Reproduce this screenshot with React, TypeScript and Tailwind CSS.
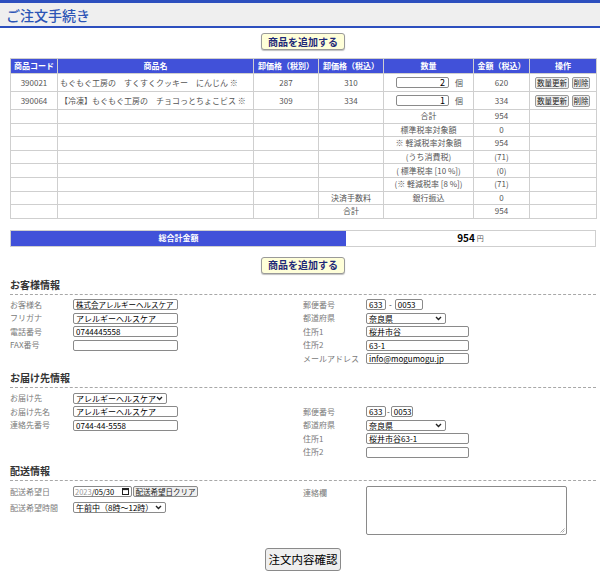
import React from "react";

const items = [
  { code: "390021", name: "もぐもぐ工房の　すくすくクッキー　にんじん ※", ex: "287", inc: "310", qty: "2", amount: "620" },
  { code: "390064", name: "【冷凍】もぐもぐ工房の　チョコっとちょこビス ※", ex: "309", inc: "334", qty: "1", amount: "334" },
];

const summary = [
  { a: "", b: "合計", c: "954" },
  { a: "", b: "標準税率対象額", c: "0" },
  { a: "", b: "※ 軽減税率対象額", c: "954" },
  { a: "", b: "(うち消費税)", c: "(71)" },
  { a: "", b: "( 標準税率 [10 %])", c: "(0)" },
  { a: "", b: "(※ 軽減税率 [8 %])", c: "(71)" },
  { a: "決済手数料", b: "銀行振込", c: "0" },
  { a: "合計", b: "", c: "954" },
];

function AddButton() {
  return (
    <div className="flex justify-center">
      <button className="h-[17px] w-[84px] whitespace-nowrap rounded-[3px] border border-[#9a9a9a] bg-[#ffffd9] text-[10px] font-bold leading-none text-[#1f2a78] shadow-[0_1px_1px_rgba(0,0,0,0.25)]">
        商品を追加する
      </button>
    </div>
  );
}

function Chevron() {
  return (
    <svg width="7" height="5" viewBox="0 0 7 5" className="shrink-0">
      <path d="M1 1l2.5 2.5L6 1" stroke="#222" strokeWidth="1.4" fill="none" />
    </svg>
  );
}

function Input({ value = "", w, size = "text-[8px]" }: { value?: string; w: string; size?: string }) {
  return (
    <div
      className={`flex h-[11px] items-center whitespace-nowrap rounded-[2px] border border-[#8a8a8a] bg-white pl-[2px] leading-[9px] text-black ${size} ${w}`}
    >
      {value}
    </div>
  );
}

function Select({ value, w }: { value: string; w: string }) {
  return (
    <div
      className={`flex h-[11px] items-center justify-between whitespace-nowrap rounded-[2px] border border-[#8a8a8a] bg-white pl-[2px] pr-[3px] text-[8px] leading-[9px] text-black ${w}`}
    >
      <span>{value}</span>
      <Chevron />
    </div>
  );
}

function Row({ label, children, h = "h-[13.5px]" }: { label?: string; children?: React.ReactNode; h?: string }) {
  return (
    <div className={`flex items-center ${h}`}>
      <div className="w-[63px] shrink-0 whitespace-nowrap text-[8px] leading-none text-[#7a7a7a]">{label}</div>
      {children}
    </div>
  );
}

function Heading({ children, mt }: { children: React.ReactNode; mt: string }) {
  return (
    <div className={`${mt} border-b border-dashed border-[#a8a8a8] pb-[3px] text-[10px] font-bold leading-[12px] text-[#333]`}>
      {children}
    </div>
  );
}

function Zip({ a, b, tight }: { a: string; b: string; tight?: boolean }) {
  return (
    <div className="flex items-center">
      <Input value={a} w="w-[20px]" />
      <span className={`text-[8px] leading-none text-[#333] ${tight ? "px-[1px]" : "px-[3px]"}`}>-</span>
      <Input value={b} w={tight ? "w-[22px]" : "w-[28px]"} />
    </div>
  );
}

const td = "border border-[#cfcfcf] text-[8px] leading-none text-[#555]";

export default function App() {
  return (
    <div className="min-h-[572px] w-[600px] bg-white font-['Noto_Sans_CJK_JP','Noto_Sans',sans-serif] text-[#333]">
      <div className="h-[3px] bg-[#2d4fbe]" />
      <div className="flex h-[25px] items-center border-b-2 border-[#2d4fbe] bg-[#efefef] pl-[6px] text-[14px] font-medium leading-none text-[#2c55b6]">
        ご注文手続き
      </div>

      <div className="pl-[10px] pr-[4px]">
        <div className="pt-[5px]">
          <AddButton />
        </div>

        <table className="mt-[8px] w-[586px] table-fixed border-collapse">
          <colgroup>
            <col className="w-[47px]" />
            <col className="w-[196px]" />
            <col className="w-[65px]" />
            <col className="w-[65px]" />
            <col className="w-[90px]" />
            <col className="w-[56px]" />
            <col className="w-[67px]" />
          </colgroup>
          <thead>
            <tr className="h-[15px] bg-[#4151d9] text-[8px] font-bold leading-none text-white">
              <th className="border border-[#cfcfcf] font-bold">商品コード</th>
              <th className="border border-[#cfcfcf] font-bold">商品名</th>
              <th className="border border-[#cfcfcf] font-bold">卸価格（税別）</th>
              <th className="border border-[#cfcfcf] font-bold">卸価格（税込）</th>
              <th className="border border-[#cfcfcf] font-bold">数量</th>
              <th className="border border-[#cfcfcf] font-bold">金額（税込）</th>
              <th className="border border-[#cfcfcf] font-bold">操作</th>
            </tr>
          </thead>
          <tbody>
            {items.map((it) => (
              <tr key={it.code} className="h-[18px]">
                <td className={`${td} text-center`}>{it.code}</td>
                <td className={`${td} whitespace-nowrap pl-[2px]`}>{it.name}</td>
                <td className={`${td} text-center`}>{it.ex}</td>
                <td className={`${td} text-center`}>{it.inc}</td>
                <td className={td}>
                  <div className="flex items-center pl-[12px]">
                    <div className="flex h-[11px] w-[53px] items-center justify-end rounded-[2px] border border-[#8a8a8a] pr-[3px] text-[9px] leading-none text-black">
                      {it.qty}
                    </div>
                    <span className="pl-[6px]">個</span>
                  </div>
                </td>
                <td className={`${td} text-center`}>{it.amount}</td>
                <td className={td}>
                  <div className="flex items-center gap-[3px] pl-[5px]">
                    <button className="h-[12px] w-[34px] whitespace-nowrap rounded-[2px] border border-[#999] bg-[#efefef] text-[7.5px] leading-none text-[#222]">
                      数量更新
                    </button>
                    <button className="h-[12px] w-[18px] whitespace-nowrap rounded-[2px] border border-[#999] bg-[#efefef] text-[7.5px] leading-none text-[#222]">
                      削除
                    </button>
                  </div>
                </td>
              </tr>
            ))}
            {summary.map((s, i) => (
              <tr key={i} className="h-[13.6px]">
                <td className={td} />
                <td className={td} />
                <td className={td} />
                <td className={`${td} text-center`}>{s.a}</td>
                <td className={`${td} text-center`}>{s.b}</td>
                <td className={`${td} text-center`}>{s.c}</td>
                <td className={td} />
              </tr>
            ))}
          </tbody>
        </table>

        <div className="mt-[11px] flex h-[17px] border border-[#cfcfcf]">
          <div className="flex w-[335px] items-center justify-center bg-[#4151d9] text-[8px] font-bold leading-none text-white">
            総合計金額
          </div>
          <div className="flex flex-1 items-center justify-center text-black">
            <span className="text-[10px] font-bold leading-none">954</span>
            <span className="pl-[2px] text-[7px] leading-none text-[#555]">円</span>
          </div>
        </div>

        <div className="mt-[10px]">
          <AddButton />
        </div>

        <Heading mt="mt-[5px]">お客様情報</Heading>
        <div className="mt-[3px] grid grid-cols-[293px_1fr]">
          <div>
            <Row label="お客様名">
              <Input value="株式会アレルギーヘルスケア" w="w-[105px]" size="text-[7.5px]" />
            </Row>
            <Row label="フリガナ">
              <Input value="アレルギーヘルスケア" w="w-[105px]" />
            </Row>
            <Row label="電話番号">
              <Input value="0744445558" w="w-[105px]" />
            </Row>
            <Row label="FAX番号">
              <Input w="w-[105px]" />
            </Row>
          </div>
          <div>
            <Row label="郵便番号">
              <Zip a="633" b="0053" />
            </Row>
            <Row label="都道府県">
              <Select value="奈良県" w="w-[80px]" />
            </Row>
            <Row label="住所1">
              <Input value="桜井市谷" w="w-[103px]" />
            </Row>
            <Row label="住所2">
              <Input value="63-1" w="w-[103px]" />
            </Row>
            <Row label="メールアドレス">
              <Input value="info@mogumogu.jp" w="w-[103px]" />
            </Row>
          </div>
        </div>

        <Heading mt="mt-[7px]">お届け先情報</Heading>
        <div className="mt-[3px] grid grid-cols-[293px_1fr]">
          <div>
            <Row label="お届け先">
              <Select value="アレルギーヘルスケア" w="w-[94px]" />
            </Row>
            <Row label="お届け先名">
              <Input value="アレルギーヘルスケア" w="w-[105px]" />
            </Row>
            <Row label="連絡先番号">
              <Input value="0744-44-5558" w="w-[105px]" />
            </Row>
          </div>
          <div>
            <Row />
            <Row label="郵便番号">
              <Zip a="633" b="0053" tight />
            </Row>
            <Row label="都道府県">
              <Select value="奈良県" w="w-[80px]" />
            </Row>
            <Row label="住所1">
              <Input value="桜井市谷63-1" w="w-[103px]" />
            </Row>
            <Row label="住所2">
              <Input w="w-[103px]" />
            </Row>
          </div>
        </div>

        <Heading mt="mt-[6px]">配送情報</Heading>
        <div className="mt-[3px] grid grid-cols-[293px_1fr]">
          <div>
            <Row label="配送希望日" h="h-[16px]">
              <div className="flex items-center">
                <div className="flex h-[11px] w-[59px] items-center justify-between whitespace-nowrap rounded-[2px] border border-[#8a8a8a] pl-[1px] pr-[2px] text-[7.5px] leading-none">
                  <span>
                    <span className="text-[#999]">2023</span>
                    <span className="text-black">/05/30</span>
                  </span>
                  <svg width="7" height="7" viewBox="0 0 7 7" className="shrink-0">
                    <rect x="0.5" y="0.5" width="6" height="6" fill="none" stroke="#222" />
                    <rect x="0.5" y="0.5" width="6" height="1.6" fill="#222" />
                  </svg>
                </div>
                <button className="ml-[1px] h-[11px] w-[65px] whitespace-nowrap rounded-[2px] border border-[#8a8a8a] bg-[#efefef] px-0 text-[7.5px] leading-none text-[#222]">
                  配送希望日クリア
                </button>
              </div>
            </Row>
            <Row label="配送希望時間" h="h-[16px]">
              <Select value="午前中（8時～12時）" w="w-[93px]" />
            </Row>
          </div>
          <div className="flex pt-[2px]">
            <div className="w-[63px] shrink-0 pt-[3px] text-[8px] leading-none text-[#7a7a7a]">連絡欄</div>
            <div className="relative h-[49px] w-[201px] rounded-[2px] border border-[#8a8a8a]">
              <svg width="5" height="5" viewBox="0 0 5 5" className="absolute bottom-[1px] right-[1px]">
                <path d="M4.5 0.5L0.5 4.5M4.5 2.5L2.5 4.5" stroke="#999" strokeWidth="0.8" />
              </svg>
            </div>
          </div>
        </div>

        <div className="mt-[13px] flex justify-center">
          <button className="h-[23px] w-[76px] whitespace-nowrap rounded-[3px] border border-[#8a8a8a] bg-[#efefef] px-0 text-[11.5px] leading-none text-black">
            注文内容確認
          </button>
        </div>
      </div>
    </div>
  );
}
